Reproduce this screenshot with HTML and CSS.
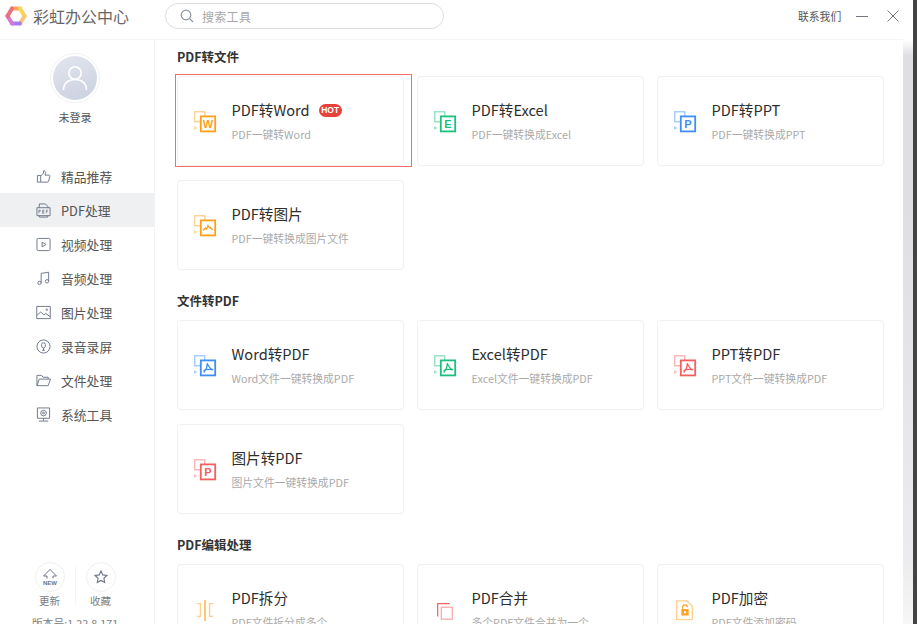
FILE: index.html
```html
<!DOCTYPE html>
<html lang="zh-CN">
<head>
<meta charset="utf-8">
<title>彩虹办公中心</title>
<link rel="stylesheet" href="styles.css">
</head>
<body>
<div class="window">
  <div class="app">
    <header class="header">
      <div class="brand">
        <svg class="logo" width="22" height="22" viewBox="0 0 22 22" fill="none" stroke-width="4" stroke-linecap="round" stroke-linejoin="round">
          <path d="M7 3.500H15" stroke="#f9a35c"/>
          <path d="M15 3.500L19.500 11" stroke="#fbd25a"/>
          <path d="M19.500 11L15 18.500" stroke="#f7c873"/>
          <path d="M15 18.500H7" stroke="#a77be8"/>
          <path d="M7 18.500L2.500 11" stroke="#d778d8"/>
          <path d="M2.500 11L7 3.500" stroke="#ee6f7c"/>
        </svg>
        <span class="brand-name">彩虹办公中心</span>
      </div>
      <div class="search">
        <svg width="14" height="14" viewBox="0 0 14 14" fill="none" stroke="#8f96a3" stroke-width="1.200"><circle cx="6" cy="6" r="4.800"/><path d="M9.600 9.600L13 13"/></svg>
        <span class="search-text">搜索工具</span>
      </div>
      <div class="head-right">
        <span class="contact">联系我们</span>
        <span class="win-min"></span>
        <svg class="win-close" width="12" height="12" viewBox="0 0 12 12" fill="none" stroke="#6f7684" stroke-width="1"><path d="M.5.5L11.500 11.500M11.500.5L.5 11.500"/></svg>
      </div>
    </header>
    <div class="body">
      <aside class="sidebar">
        <div class="avatar">
          <div class="avatar-inner">
            <svg width="30" height="30" viewBox="0 0 30 30" fill="none" stroke="#fff" stroke-width="1.600"><circle cx="15" cy="10" r="6.200"/><path d="M3.500 27c0-7 5-10.500 11.500-10.500S26.500 20 26.500 27"/></svg>
          </div>
        </div>
        <div class="login">未登录</div>
        <nav class="nav">
          <div class="nav-item">
            <svg class="nav-ico" viewBox="0 0 16 16"><path d="M5 7v7H1.500V7zM5 7.500l3-3V2c1.500-.5 2.500 1 2 3l-.4 1.500h4.400c.8 0 1 .8.800 1.400l-1.500 5.200c-.2.600-.6.900-1.200.9H5"/></svg>
            <span>精品推荐</span>
          </div>
          <div class="nav-item is-active">
            <svg class="nav-ico" viewBox="0 0 16 16"><path d="M3.500 5V1h6.500l2.500 2.500V5M1 5h14v8.500H1zM3.500 13.500V15h9v-1.500"/><path class="thin" d="M3 11V7.500h1.500v1.500H3M7 7.500v3.500h1.200V7.500zM11 11V7.500h2M11 9h1.500"/></svg>
            <span>PDF处理</span>
          </div>
          <div class="nav-item">
            <svg class="nav-ico" viewBox="0 0 16 16"><rect x="1" y="1.500" width="14" height="13" rx="1.500"/><path d="M6.500 5.500v5l4-2.500z"/></svg>
            <span>视频处理</span>
          </div>
          <div class="nav-item">
            <svg class="nav-ico" viewBox="0 0 16 16"><path d="M5.500 12.500V2.500l8-1.200v9.500"/><circle cx="3.700" cy="12.700" r="1.800"/><circle cx="11.700" cy="11" r="1.800"/></svg>
            <span>音频处理</span>
          </div>
          <div class="nav-item">
            <svg class="nav-ico" viewBox="0 0 16 16"><rect x=".8" y="1.500" width="14.400" height="13"/><path d="M1 11l4-3.500 3.500 3 2-1.500 4.500 3.500"/><circle cx="11.500" cy="5" r=".8"/></svg>
            <span>图片处理</span>
          </div>
          <div class="nav-item">
            <svg class="nav-ico" viewBox="0 0 16 16"><circle cx="8" cy="8" r="7"/><path d="M8 4a2 2 0 0 1 2 2v1.500a2 2 0 0 1-4 0V6a2 2 0 0 1 2-2zM8 9.500V12M6.500 12h3"/></svg>
            <span>录音录屏</span>
          </div>
          <div class="nav-item">
            <svg class="nav-ico" viewBox="0 0 16 16"><path d="M1 13.500V2.500h5l1.500 2H13v2M1 13.500l2.500-7H15.500L13 13.500z"/></svg>
            <span>文件处理</span>
          </div>
          <div class="nav-item">
            <svg class="nav-ico" viewBox="0 0 16 16"><rect x="1.500" y="1" width="13" height="11"/><circle cx="8" cy="6.500" r="3"/><circle cx="8" cy="6.500" r="1"/><path d="M8 12v2.500M3 15h10"/></svg>
            <span>系统工具</span>
          </div>
        </nav>
        <div class="side-foot">
          <div class="foot-actions">
            <div class="foot-btn">
              <div class="foot-circle">
                <svg width="18" height="18" viewBox="0 0 18 18" fill="none" stroke="#6b7488" stroke-width="1"><path d="M9 1.500L2.500 8H6v2.500M9 1.500L15.500 8H12v2.500"/><text class="new-tag" x="9" y="16.500" text-anchor="middle">NEW</text></svg>
              </div>
              <span>更新</span>
            </div>
            <div class="foot-sep"></div>
            <div class="foot-btn">
              <div class="foot-circle">
                <svg width="14" height="14" viewBox="0 0 14 14" fill="none" stroke="#6b7488" stroke-width="1.100"><path d="M7 1l1.800 3.900 4.200.5-3.100 2.900.8 4.200L7 10.400l-3.700 2.100.8-4.200L1 5.400l4.200-.5z"/></svg>
              </div>
              <span>收藏</span>
            </div>
          </div>
          <div class="version">版本号:1.22.8.171</div>
        </div>
      </aside>
      <main class="main">
        <section class="section">
          <h2 class="section-title">PDF转文件</h2>
          <div class="cards">
            <div class="card is-selected">
              <svg class="tool-ico c-orange" viewBox="0 0 24 22"><rect class="bk" x="1.700" y=".7" width="10" height="10"/><path class="tri" d="M1 15l3.500 2-3.500 2z"/><rect class="fr" x="7.800" y="5.400" width="14.400" height="15"/><text class="ltr" x="15" y="17">W</text></svg>
              <div class="card-text"><div class="card-title">PDF转Word<span class="hot">HOT</span></div><div class="card-sub">PDF一键转Word</div></div>
            </div>
            <div class="card">
              <svg class="tool-ico c-green" viewBox="0 0 24 22"><rect class="bk" x="1.700" y=".7" width="10" height="10"/><path class="tri" d="M1 15l3.500 2-3.500 2z"/><rect class="fr" x="7.800" y="5.400" width="14.400" height="15"/><text class="ltr" x="15" y="17">E</text></svg>
              <div class="card-text"><div class="card-title">PDF转Excel</div><div class="card-sub">PDF一键转换成Excel</div></div>
            </div>
            <div class="card">
              <svg class="tool-ico c-blue" viewBox="0 0 24 22"><rect class="bk" x="1.700" y=".7" width="10" height="10"/><path class="tri" d="M1 15l3.500 2-3.500 2z"/><rect class="fr" x="7.800" y="5.400" width="14.400" height="15"/><text class="ltr" x="15" y="17">P</text></svg>
              <div class="card-text"><div class="card-title">PDF转PPT</div><div class="card-sub">PDF一键转换成PPT</div></div>
            </div>
            <div class="card">
              <svg class="tool-ico c-orange" viewBox="0 0 24 22"><rect class="bk" x="1.700" y=".7" width="10" height="10"/><path class="tri" d="M1 15l3.500 2-3.500 2z"/><rect class="fr" x="7.800" y="5.400" width="14.400" height="15"/><path class="ln" d="M10 15.500l2.500-2.500 1 1 1.500-3.500 1.500 2.500 1-.5 2 2.500"/></svg>
              <div class="card-text"><div class="card-title">PDF转图片</div><div class="card-sub">PDF一键转换成图片文件</div></div>
            </div>
          </div>
        </section>
        <section class="section">
          <h2 class="section-title">文件转PDF</h2>
          <div class="cards">
            <div class="card">
              <svg class="tool-ico c-blue" viewBox="0 0 24 22"><rect class="bk" x="1.700" y=".7" width="10" height="10"/><path class="tri" d="M1 15l3.500 2-3.500 2z"/><rect class="fr" x="7.800" y="5.400" width="14.400" height="15"/><path class="ln" d="M14.500 8c0 3-1 6-3.800 9.500M14.500 8c.5 3 2.500 5.500 5.500 6.800M10.500 15.500c3-1.200 6-1.500 9.500-.7"/></svg>
              <div class="card-text"><div class="card-title">Word转PDF</div><div class="card-sub">Word文件一键转换成PDF</div></div>
            </div>
            <div class="card">
              <svg class="tool-ico c-green" viewBox="0 0 24 22"><rect class="bk" x="1.700" y=".7" width="10" height="10"/><path class="tri" d="M1 15l3.500 2-3.500 2z"/><rect class="fr" x="7.800" y="5.400" width="14.400" height="15"/><path class="ln" d="M14.500 8c0 3-1 6-3.800 9.500M14.500 8c.5 3 2.500 5.500 5.500 6.800M10.500 15.500c3-1.200 6-1.500 9.500-.7"/></svg>
              <div class="card-text"><div class="card-title">Excel转PDF</div><div class="card-sub">Excel文件一键转换成PDF</div></div>
            </div>
            <div class="card">
              <svg class="tool-ico c-red" viewBox="0 0 24 22"><rect class="bk" x="1.700" y=".7" width="10" height="10"/><path class="tri" d="M1 15l3.500 2-3.500 2z"/><rect class="fr" x="7.800" y="5.400" width="14.400" height="15"/><path class="ln" d="M14.500 8c0 3-1 6-3.800 9.500M14.500 8c.5 3 2.500 5.500 5.500 6.800M10.500 15.500c3-1.200 6-1.500 9.500-.7"/></svg>
              <div class="card-text"><div class="card-title">PPT转PDF</div><div class="card-sub">PPT文件一键转换成PDF</div></div>
            </div>
            <div class="card">
              <svg class="tool-ico c-red" viewBox="0 0 24 22"><rect class="bk" x="1.700" y=".7" width="10" height="10"/><path class="tri" d="M1 15l3.500 2-3.500 2z"/><rect class="fr" x="7.800" y="5.400" width="14.400" height="15"/><text class="ltr" x="15" y="17">P</text></svg>
              <div class="card-text"><div class="card-title">图片转PDF</div><div class="card-sub">图片文件一键转换成PDF</div></div>
            </div>
          </div>
        </section>
        <section class="section">
          <h2 class="section-title">PDF编辑处理</h2>
          <div class="cards">
            <div class="card">
              <svg class="tool-ico c-orange" viewBox="0 0 24 24"><path class="ln soft" d="M3 5h4v14H3M21 5h-4v14h4"/><path class="ln" d="M12 1v23"/></svg>
              <div class="card-text"><div class="card-title">PDF拆分</div><div class="card-sub">PDF文件拆分成多个</div></div>
            </div>
            <div class="card">
              <svg class="tool-ico c-red" viewBox="0 0 24 24"><path class="ln" d="M4 19V5h13"/><rect class="ln soft" x="8" y="9" width="12" height="13"/></svg>
              <div class="card-text"><div class="card-title">PDF合并</div><div class="card-sub">多个PDF文件合并为一个</div></div>
            </div>
            <div class="card">
              <svg class="tool-ico c-orange" viewBox="0 0 24 24"><path class="ln soft" d="M3 2h11l6 6v13a1.500 1.500 0 0 1-1.500 1.500H3z"/><path class="solid" d="M8 11h8v7H8z"/><path class="ln" d="M9.500 11V9a2.500 2.500 0 0 1 5 0"/><circle class="keyhole" cx="12" cy="14.500" r="1.300"/></svg>
              <div class="card-text"><div class="card-title">PDF加密</div><div class="card-sub">PDF文件添加密码</div></div>
            </div>
          </div>
        </section>
      </main>
    </div>
  </div>
  <div class="scrollbar"></div>
  <div class="edge"></div>
</div>
</body>
</html>
```
FILE: styles.css
```css
* { box-sizing: border-box; }
html, body { margin: 0; height: 100%; overflow: hidden; }
body {
  background: #fff;
  font-family: "Noto Sans CJK SC", "Noto Sans", sans-serif;
  color: #333;
}
.window { display: flex; width: 917px; height: 624px; overflow: hidden; }
.app { width: 903px; height: 624px; display: flex; flex-direction: column; }
.scrollbar {
  width: 10px;
  background: linear-gradient(#fff 0, #fff 40px, #dfdfe3 56px, #dfdfe3 200px, #ececee 560px, #f6f6f7 624px);
}
.edge { width: 4px; background: #444; }

.header { height: 40px; flex: none; display: flex; align-items: flex-start; border-bottom: 1px solid #f5f5f5; }
.brand { width: 165px; height: 32px; padding-left: 5px; display: flex; align-items: center; gap: 6px; }
.logo { flex: none; }
.brand-name { font-size: 16px; color: #666; line-height: 32px; }
.search {
  width: 279px; height: 26px; margin-top: 3px; padding-left: 14px;
  display: flex; align-items: center; gap: 8px;
  border: 1px solid #dcdfe3; border-radius: 13px;
}
.search-text { font-size: 12px; color: #a8a8a8; letter-spacing: .3px; }
.head-right { margin-left: auto; height: 32px; padding-right: 4px; display: flex; align-items: center; }
.contact { font-size: 10.800px; color: #555; width: 44px; white-space: nowrap; }
.win-min { width: 12px; height: 1px; background: #6f7684; margin-left: 14px; }
.win-close { margin-left: 19px; }

.body { flex: 1; min-height: 0; display: flex; }
.sidebar { width: 155px; flex: none; padding-right: 4px; border-right: 1px solid #f3f3f3; display: flex; flex-direction: column; align-items: center; overflow: hidden; }
.avatar {
  width: 50px; height: 50px; margin-top: 13px; border-radius: 50%; flex: none;
  border: 1px solid #f2f2f2; display: flex; align-items: center; justify-content: center;
}
.avatar-inner {
  width: 44px; height: 44px; border-radius: 50%;
  background: linear-gradient(160deg, #e3e6ee, #c9d0df);
  display: flex; align-items: center; justify-content: center;
}
.login { margin-top: 6px; font-size: 11px; line-height: 16px; color: #555; }
.nav { width: 154px; margin: 34px -4px 0 0; flex: none; align-self: flex-start; }
.nav-item { height: 34px; padding-left: 36px; display: flex; align-items: center; gap: 10px; font-size: 12.800px; color: #555; }
.nav-item.is-active { background: #eff0f2; }
.nav-ico { width: 15px; height: 15px; flex: none; fill: none; stroke: #6b7488; stroke-width: 1; stroke-linejoin: round; }
.nav-ico .thin { stroke-width: .7; }

.side-foot { margin-top: 131px; display: flex; flex-direction: column; align-items: center; }
.foot-actions { display: flex; align-items: flex-start; }
.foot-btn { width: 50px; display: flex; flex-direction: column; align-items: center; font-size: 10.500px; line-height: 16px; color: #808080; }
.foot-circle {
  width: 30px; height: 30px; margin-bottom: 1px; border: 1px solid #f0f0f0; border-radius: 50%;
  display: flex; align-items: center; justify-content: center;
}
.foot-sep { width: 1px; height: 40px; margin-top: 3px; background: #f5f5f5; }
.new-tag { font-family: "Liberation Sans", sans-serif; font-size: 6px; font-weight: 700; fill: #6b7488; stroke: none; }
.version { margin-top: 6px; font-size: 10.800px; line-height: 16px; color: #808080; white-space: nowrap; }

.main { flex: 1; min-width: 0; padding: 7px 0 0 22px; overflow: hidden; }
.section { margin-bottom: 21px; }
.section-title { margin: 0 0 9px; font-size: 12.500px; line-height: 20px; font-weight: 700; color: #333; }
.cards { display: grid; grid-template-columns: repeat(3, 227px); grid-auto-rows: 90px; gap: 14px 13px; }
.card { position: relative; display: flex; align-items: flex-start; padding-left: 15px; border: 1px solid #f0f0f0; border-radius: 4px; background: #fff; }
.is-selected::after {
  content: ""; position: absolute; left: -3px; top: -3px; width: 235px; height: 91px;
  border: 1px solid #f56c6c;
}
.tool-ico { width: 24px; height: 22px; margin-top: 34px; margin-right: 14.500px; flex: none; fill: none; }
.card-text { padding-top: 23px; }
.card-title { display: flex; align-items: center; font-size: 14.600px; line-height: 20px; color: #2e2e2e; white-space: nowrap; }
.card-sub { margin-top: 6px; font-size: 10.800px; line-height: 16px; color: #aaa; white-space: nowrap; }
.hot {
  margin-left: 9px; width: 23px; height: 13px; border-radius: 6.500px; background: #e8413c;
  color: #fff; font-family: "Liberation Sans", sans-serif; font-size: 8.500px; line-height: 13px; font-weight: 700; text-align: center;
}
.c-orange { color: #ff9f1c; }
.c-green { color: #1dbf7d; }
.c-blue { color: #3f8ef7; }
.c-red { color: #f55f5f; }
.bk { stroke: currentColor; stroke-width: 1.500; opacity: .45; fill: none; }
.tri { fill: currentColor; opacity: .4; }
.fr { stroke: currentColor; stroke-width: 1.800; fill: #fff; }
.ltr { font-family: "Liberation Sans", sans-serif; font-size: 11px; font-weight: 700; fill: currentColor; text-anchor: middle; }
.ln { stroke: currentColor; stroke-width: 1.300; fill: none; }
.ln.soft { opacity: .5; stroke-width: 1.500; }
.solid { fill: currentColor; }
.keyhole { fill: #fff; }
```
